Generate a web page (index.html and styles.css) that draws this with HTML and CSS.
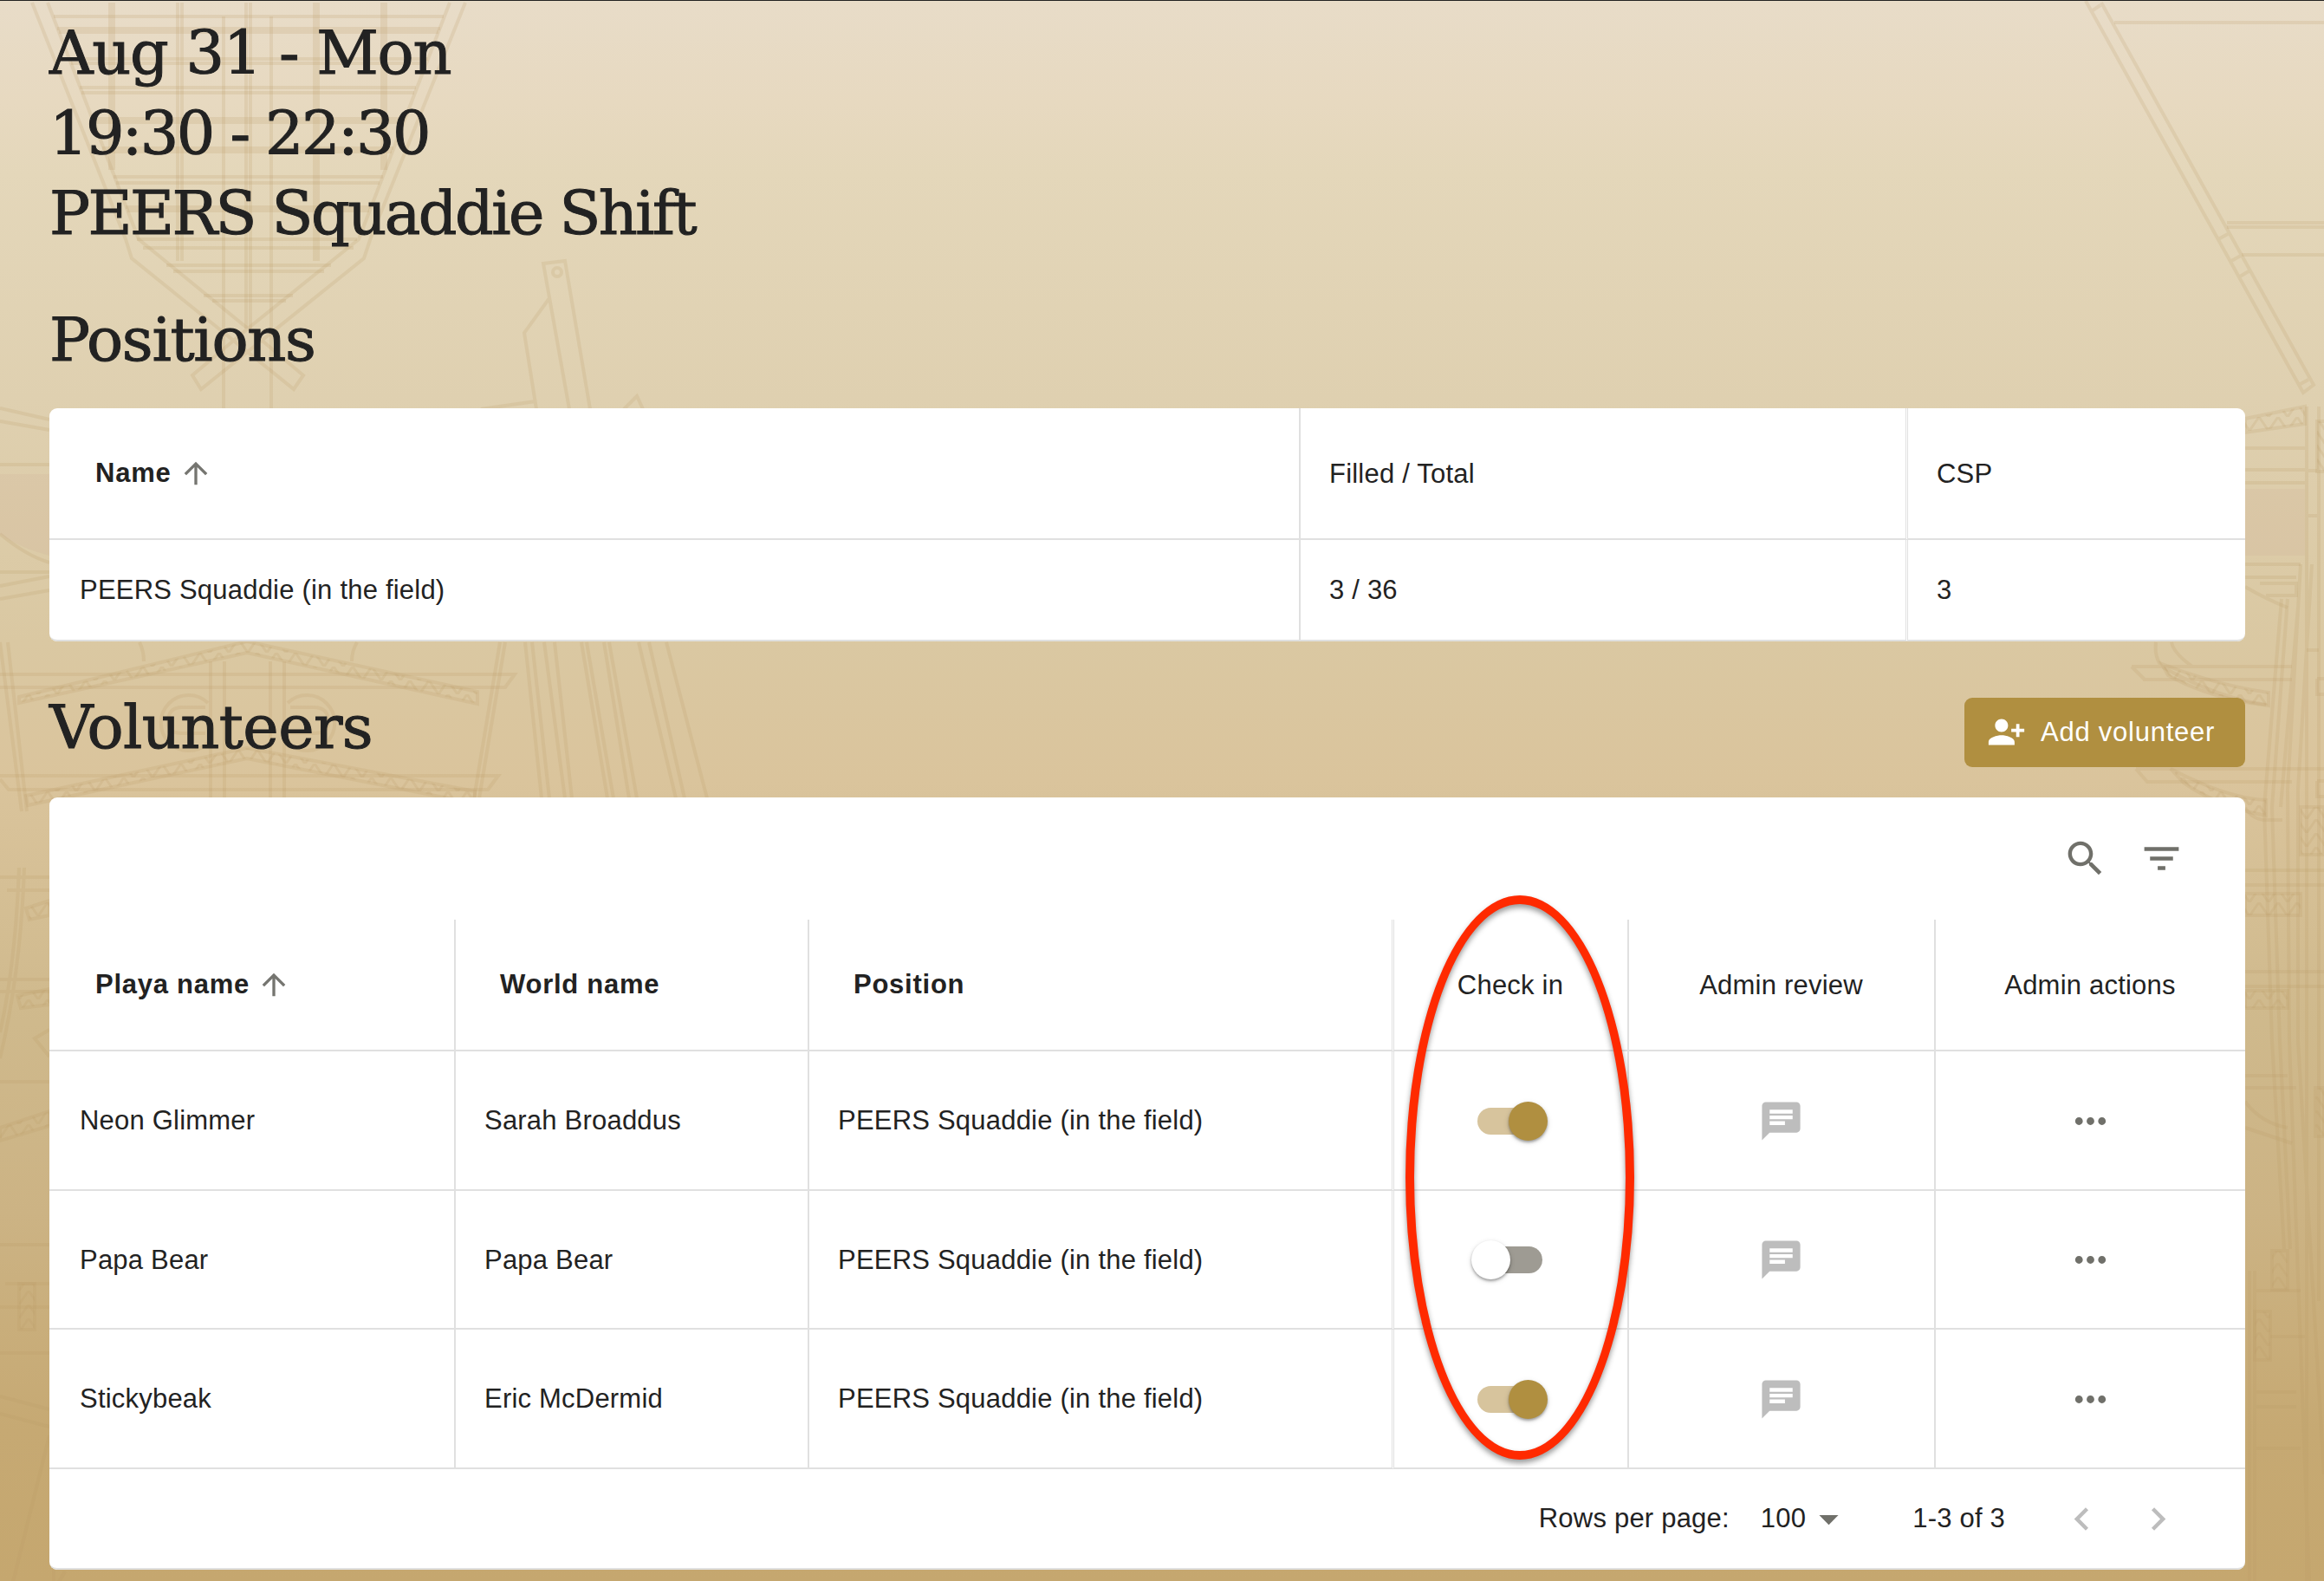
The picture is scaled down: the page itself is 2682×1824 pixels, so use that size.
FILE: index.html
```html
<!DOCTYPE html>
<html lang="en">
<head>
    <meta charset="UTF-8">
    <meta name="viewport" content="width=device-width, initial-scale=1.0">
    <title>PEERS Squaddie Shift</title>
    <link rel="stylesheet" href="styles.css">
</head>
<body>
    <!-- ship drawing behind the page -->
    <svg class="backdrop" viewBox="0 0 2682 1824" aria-hidden="true">
        <defs>
            <pattern id="lattice" width="22" height="16" patternUnits="userSpaceOnUse">
                <path class="lattice-line" d="M0 16L11 0L22 16"/>
            </pattern>
        </defs>
        <!-- stern window -->
        <path d="M37 2L145 275L152 297L339 448L350 432L286 378L160 275L55 2M537 2L428 273L420 297L232 448L222 432L286 378L414 275L519 2"/>
        <path d="M127 2V195M131 2V195M205 2V300M210 2V300M284 2V378M289 2V378M363 2V300M367 2V300M441 2V195M445 2V195M258 18V471M313 18V471"/>
        <path d="M62 18H512M66 32H508M68 36H506M80 67H494M82 72H492M92 100H480M94 106H478M106 136H466M108 140H464M118 170H454M120 174H452M131 203H442M134 210H438M145 238H428M147 242H426M158 275H412M165 285H408M192 305H382M200 312H374M235 340H338M245 346H330"/>
        <!-- oar -->
        <path d="M657 471L627 303L652 300L681 471M619 471L605 383L634 343M720 471L735 456L742 471M555 471L618 462"/>
        <circle cx="643" cy="313" r="5"/>
        <!-- upper left trusses -->
        <path d="M0 470L57 483M0 485L57 495M0 535H57M0 615Q30 640 57 648M0 659H57M0 675L57 664M0 690L57 680"/>
        <path class="tint" d="M0 546H57V640Q20 630 0 615Z"/>
        <path class="truss" d="M22 803L285 739L551 797L551 811L285 752L22 810Z"/>
        <path class="truss" d="M30 917L285 862L548 912L548 926L285 874L32 928Z"/>
        <path d="M0 777H594L583 792H0M0 894H575L563 910H10L0 898M161 740Q166 750 166 762M412 740Q406 750 406 762"/>
        <path d="M243 762V920M259 762V920M312 762V920M328 762V920"/>
        <path d="M240 810A32 32 0 1 0 240 856M237 815H210Q194 815 194 832Q194 845 210 845H237M332 810A32 32 0 1 1 332 856M335 815H362Q379 815 379 832Q379 845 362 845H335"/>
        <path d="M0 740L25 935M9 740L31 935M583 740L553 920M577 740L547 920M606 740L625 920M614 740L634 920M628 740L652 920M640 740L660 920M671 740L701 920M677 740L708 920M697 740L726 920M703 740L735 920M737 740L780 920M749 740L790 920M769 740L816 920"/>
        <!-- lower left -->
        <path d="M0 1011H57M8 1026H57M22 1000Q18 1110 0 1190M28 1000Q24 1120 0 1220M0 1129H57M0 1143H57M57 1187L40 1197L57 1218M0 1247H57M0 1435H57M6 1480H57M0 1507H57M0 1560H57M0 1610L57 1625M0 1630L57 1645M57 1655L15 1824M62 1810V1824M75 1812L68 1824"/>
        <path class="truss" d="M30 1047L57 1038V1055L34 1060ZM20 1148L57 1140V1158L24 1162ZM0 1300L57 1281V1298L0 1315ZM22 1480H40V1533H22Z"/>
        <!-- upper right beam -->
        <path d="M2407 0L2658 452L2670 443L2425 2M2415 11L2424 5M2560 275L2571 269M2575 300L2586 294M2585 318L2595 312M2653 443L2664 437"/>
        <path d="M2440 25H2682M2570 256H2682M2570 261H2682M2587 293H2682"/>
        <!-- right hull -->
        <path class="tint" d="M2591 563H2660V640H2591Z"/>
        <path class="truss" d="M2591 482L2660 468V488L2591 498ZM2674 485H2690V543H2674Z"/>
        <path d="M2591 516H2660M2591 541H2662M2591 556H2662M2591 650H2655M2591 665H2650M2662 468V640M2676 468V640M2662 542H2676M2662 594H2676M2591 676Q2615 690 2640 700M2608 672H2650V686H2615"/>
        <path d="M2488 740Q2486 758 2495 768Q2560 805 2615 812M2506 740Q2508 752 2530 768M2460 768H2645M2473 783H2645M2460 768L2475 783M2465 886L2478 901H2645M2465 886H2682M2591 931Q2600 945 2615 945H2634"/>
        <path class="truss" d="M2495 765Q2560 790 2618 798V813Q2550 805 2502 778ZM2505 886Q2570 920 2615 922V940Q2560 930 2520 902Z"/>
        <path d="M2655 650L2640 910L2642 1200L2665 1824M2668 650L2652 910V1200L2682 1700M2633 690L2613 930L2622 1200L2636 1440M2640 690L2622 930L2631 1200L2643 1440M2652 700L2632 930M2662 640V1824M2676 640V1500"/>
        <path d="M2662 749H2676M2674 782H2690V800H2674V782M2674 900H2690V918H2674V900M2591 1003H2682M2591 1020H2682M2591 1120H2682M2591 1137H2682M2591 1240H2640M2591 1254H2650M2591 1270Q2610 1295 2640 1300M2591 1300L2645 1318M2602 1488H2655M2620 1541H2660M2604 1605H2650M2604 1622H2650M2604 1670H2655M2596 1465V1824M2602 1465V1824"/>
        <path class="truss" d="M2622 1442H2640V1487H2622ZM2602 1512H2620V1568H2602ZM2655 930H2682V985H2655ZM2591 1030H2655V1055H2591ZM2591 1142H2640V1162H2591ZM2672 1254H2682V1310H2672Z"/>
    </svg>

    <main class="page">
        <h1 class="heading">
            <span class="line-date">Aug 31 - Mon</span><br>
            <span class="line-time">19:30 - 22:30</span><br>
            <span class="line-shift">PEERS Squaddie Shift</span>
        </h1>

        <h2 class="heading positions-title">Positions</h2>
        <section class="card">
            <table class="positions">
                <colgroup><col class="c-name"><col class="c-filled"><col class="c-csp"></colgroup>
                <thead>
                    <tr>
                        <th class="sortable">Name <svg class="arrow" viewBox="0 0 24 24"><path d="M4 12l1.41 1.41L11 7.83V20h2V7.83l5.58 5.59L20 12l-8-8-8 8z"/></svg></th>
                        <th class="double">Filled / Total</th>
                        <th>CSP</th>
                    </tr>
                </thead>
                <tbody>
                    <tr>
                        <td>PEERS Squaddie (in the field)</td>
                        <td class="double">3 / 36</td>
                        <td>3</td>
                    </tr>
                </tbody>
            </table>
        </section>

        <div class="title-row">
            <h2 class="heading volunteers-title">Volunteers</h2>
            <button class="add-btn">
                <svg viewBox="0 0 24 24"><path d="M13 8c0-2.21-1.79-4-4-4S5 5.79 5 8s1.79 4 4 4 4-1.79 4-4zm2 2v2h3v3h2v-3h3v-2h-3V7h-2v3h-3zM1 18v2h16v-2c0-2.66-5.33-4-8-4s-8 1.34-8 4z"/></svg>
                Add volunteer
            </button>
        </div>

        <section class="card">
            <div class="toolbar">
                <svg class="icon" viewBox="0 0 24 24"><path d="M15.5 14h-.79l-.28-.27C15.41 12.59 16 11.11 16 9.5 16 5.91 13.09 3 9.5 3S3 5.91 3 9.5 5.91 16 9.5 16c1.61 0 3.09-.59 4.23-1.57l.27.28v.79l5 4.99L20.49 19l-4.99-5zm-6 0C7.01 14 5 11.99 5 9.5S7.01 5 9.5 5 14 7.01 14 9.5 11.99 14 9.5 14z"/></svg>
                <svg class="icon" viewBox="0 0 24 24"><path d="M10 18h4v-2h-4v2zM3 6v2h18V6H3zm3 7h12v-2H6v2z"/></svg>
            </div>
            <table class="volunteers">
                <colgroup><col class="c-playa"><col class="c-world"><col class="c-position"><col class="c-check"><col class="c-review"><col class="c-actions"></colgroup>
                <thead>
                    <tr>
                        <th class="sortable">Playa name <svg class="arrow" viewBox="0 0 24 24"><path d="M4 12l1.41 1.41L11 7.83V20h2V7.83l5.58 5.59L20 12l-8-8-8 8z"/></svg></th>
                        <th class="sortable">World name</th>
                        <th class="sortable double">Position</th>
                        <th class="center">Check in</th>
                        <th class="center">Admin review</th>
                        <th class="center">Admin actions</th>
                    </tr>
                </thead>
                <tbody>
                    <tr>
                        <td>Neon Glimmer</td>
                        <td>Sarah Broaddus</td>
                        <td class="double">PEERS Squaddie (in the field)</td>
                        <td class="center"><span class="switch on"></span></td>
                        <td class="center"><svg class="icon chat" viewBox="0 0 24 24"><path d="M20 2H4c-1.1 0-1.99.9-1.99 2L2 22l4-4h14c1.1 0 2-.9 2-2V4c0-1.1-.9-2-2-2zM6 9h12v2H6V9zm8 5H6v-2h8v2zm4-6H6V6h12v2z"/></svg></td>
                        <td class="center"><svg class="icon" viewBox="0 0 24 24"><path d="M6 10c-1.1 0-2 .9-2 2s.9 2 2 2 2-.9 2-2-.9-2-2-2zm12 0c-1.1 0-2 .9-2 2s.9 2 2 2 2-.9 2-2-.9-2-2-2zm-6 0c-1.1 0-2 .9-2 2s.9 2 2 2 2-.9 2-2-.9-2-2-2z"/></svg></td>
                    </tr>
                    <tr>
                        <td>Papa Bear</td>
                        <td>Papa Bear</td>
                        <td class="double">PEERS Squaddie (in the field)</td>
                        <td class="center"><span class="switch"></span></td>
                        <td class="center"><svg class="icon chat" viewBox="0 0 24 24"><path d="M20 2H4c-1.1 0-1.99.9-1.99 2L2 22l4-4h14c1.1 0 2-.9 2-2V4c0-1.1-.9-2-2-2zM6 9h12v2H6V9zm8 5H6v-2h8v2zm4-6H6V6h12v2z"/></svg></td>
                        <td class="center"><svg class="icon" viewBox="0 0 24 24"><path d="M6 10c-1.1 0-2 .9-2 2s.9 2 2 2 2-.9 2-2-.9-2-2-2zm12 0c-1.1 0-2 .9-2 2s.9 2 2 2 2-.9 2-2-.9-2-2-2zm-6 0c-1.1 0-2 .9-2 2s.9 2 2 2 2-.9 2-2-.9-2-2-2z"/></svg></td>
                    </tr>
                    <tr>
                        <td>Stickybeak</td>
                        <td>Eric McDermid</td>
                        <td class="double">PEERS Squaddie (in the field)</td>
                        <td class="center"><span class="switch on"></span></td>
                        <td class="center"><svg class="icon chat" viewBox="0 0 24 24"><path d="M20 2H4c-1.1 0-1.99.9-1.99 2L2 22l4-4h14c1.1 0 2-.9 2-2V4c0-1.1-.9-2-2-2zM6 9h12v2H6V9zm8 5H6v-2h8v2zm4-6H6V6h12v2z"/></svg></td>
                        <td class="center"><svg class="icon" viewBox="0 0 24 24"><path d="M6 10c-1.1 0-2 .9-2 2s.9 2 2 2 2-.9 2-2-.9-2-2-2zm12 0c-1.1 0-2 .9-2 2s.9 2 2 2 2-.9 2-2-.9-2-2-2zm-6 0c-1.1 0-2 .9-2 2s.9 2 2 2 2-.9 2-2-.9-2-2-2z"/></svg></td>
                    </tr>
                </tbody>
            </table>
            <div class="pager">
                <span>Rows per page:</span>
                <span class="per-page">100 <svg class="icon" viewBox="0 0 24 24"><path d="M7 10l5 5 5-5z"/></svg></span>
                <span class="range">1-3 of 3</span>
                <svg class="icon nav" viewBox="0 0 24 24"><path d="M15.41 16.59L10.83 12l4.58-4.59L14 6l-6 6 6 6 1.41-1.41z"/></svg>
                <svg class="icon nav" viewBox="0 0 24 24"><path d="M8.59 16.59L13.17 12 8.59 7.41 10 6l6 6-6 6-1.41-1.41z"/></svg>
            </div>
            <div class="marker"></div>
        </section>
    </main>
</body>
</html>
```
FILE: styles.css
```css
:root {
    --text: #222;
    --gold: #b08f40;
    --line: #e0e0e0;
    --icon: #70706a;
    --muted: #bdbdbd;
}

* {
    box-sizing: border-box;
}

body {
    margin: 0;
    height: 1824px;
    overflow: hidden;
    position: relative;
    border-top: 1px solid #222;
    color: var(--text);
    font: 31px/44px "Helvetica Neue", "Liberation Sans", Arial, sans-serif;
    letter-spacing: 0.21px;
    background: linear-gradient(#e8dcc8 0, #e7d9c0 120px, #e4d7ba 200px, #dfd0b0 460px, #dac8a2 740px, #dac49c 900px, #cfb98c 1180px, #ccb384 1400px, #c6a973 1650px, #c5a76f 1824px);
}

.backdrop {
    position: absolute;
    top: 0;
    left: 0;
    width: 2682px;
    height: 1824px;
    fill: none;
    stroke: rgba(184, 154, 100, 0.19);
    stroke-width: 4;
}

.backdrop .truss {
    fill: url(#lattice);
}

.backdrop .lattice-line {
    stroke-width: 3;
}

.backdrop .tint {
    fill: rgba(200, 170, 150, 0.15);
    stroke: none;
}

.page {
    position: relative;
    padding: 14px 91px 0 57px;
}

.heading {
    margin: 0;
    font: 400 70px/92.5px Rockwell, "DejaVu Serif", serif;
    white-space: nowrap;
    -webkit-text-stroke: 1px var(--text);
}

.line-date { letter-spacing: -1.3px; }
.line-time { letter-spacing: -2.6px; }
.line-shift { letter-spacing: -2.6px; }

.positions-title {
    margin: 53px 0 33px;
    letter-spacing: -1.3px;
}

.volunteers-title {
    letter-spacing: -0.6px;
}

.card {
    position: relative;
    background: #fff;
    border-radius: 9px;
}

table {
    width: 100%;
    table-layout: fixed;
    border-collapse: separate;
    border-spacing: 0;
}

th, td {
    padding: 1px 0 0 33px;
    text-align: left;
    font-weight: 400;
    border-right: 2px solid var(--line);
    border-bottom: 2px solid var(--line);
    vertical-align: middle;
}

td:first-child {
    padding-left: 35px;
}

th {
    height: 152px;
}

th.sortable {
    padding: 0 0 0 51px;
    font-weight: 700;
    letter-spacing: 0.75px;
}

th.sortable:first-child {
    padding-left: 53px;
}

th:last-child, td:last-child {
    border-right: none;
}

th.double, td.double {
    border-right: 3px double var(--line);
}

th.center, td.center {
    padding: 1px 1px 0 0;
    text-align: center;
}

.arrow {
    width: 40px;
    height: 40px;
    margin-left: -1px;
    vertical-align: -10px;
    fill: #757570;
}

.c-name { width: 1444px; }
.c-filled { width: 701px; }
.c-csp { width: 389px; }
.c-playa { width: 469px; }
.c-world { width: 408px; }
.c-position { width: 675px; }
.c-check { width: 271px; }
.c-review { width: 354px; }
.c-actions { width: 357px; }

.positions td {
    height: 117px;
}

.positions td:first-child { border-bottom-left-radius: 9px; }
.positions td:last-child { border-bottom-right-radius: 9px; }

.volunteers td {
    height: 161px;
}

.volunteers tr:nth-child(2) td {
    height: 160px;
}

.title-row {
    display: flex;
    justify-content: space-between;
    align-items: flex-end;
    height: 91px;
    margin: 54px 0 35px;
}

.add-btn {
    display: flex;
    align-items: center;
    width: 324px;
    height: 80px;
    padding: 0 0 1px 26px;
    gap: 17px;
    border: none;
    border-radius: 9px;
    background: var(--gold);
    color: #fff;
    font: inherit;
    letter-spacing: 0.75px;
    white-space: nowrap;
}

.add-btn svg {
    width: 45px;
    height: 45px;
    fill: #fff;
}

.toolbar {
    display: flex;
    justify-content: flex-end;
    align-items: center;
    gap: 35px;
    height: 141px;
    padding: 0 70px 1px 0;
}

.icon {
    width: 53px;
    height: 53px;
    flex: none;
    display: block;
    fill: var(--icon);
}

td .icon {
    margin: 0 auto;
}

.icon.chat, .icon.nav {
    fill: var(--muted);
}

.switch {
    display: block;
    position: relative;
    left: -1px;
    width: 75px;
    height: 31px;
    margin: 0 auto;
    border-radius: 16px;
    background: #9e9b93;
}

.switch::after {
    content: "";
    position: absolute;
    top: -7px;
    left: -7px;
    width: 45px;
    height: 45px;
    border-radius: 50%;
    background: #fff;
    box-shadow: 0 2px 3px rgba(0, 0, 0, 0.3), 0 2px 6px rgba(0, 0, 0, 0.15);
}

.switch.on {
    background: #d7c49d;
}

.switch.on::after {
    left: 36px;
    background: var(--gold);
}

.pager {
    display: flex;
    justify-content: flex-end;
    align-items: center;
    height: 116px;
    padding-right: 74px;
    border-bottom: 2px solid var(--line);
    border-radius: 0 0 9px 9px;
}

.per-page {
    display: flex;
    align-items: center;
    margin-left: 36px;
}

.range {
    margin: 0 62px 0 70px;
}

.nav + .nav {
    margin-left: 35px;
}

/* red ring round the check-in column */
.marker {
    position: absolute;
    left: 1565px;
    top: 113px;
    width: 264px;
    height: 651px;
    border: 10px solid #ff2a00;
    border-radius: 50%;
    filter: drop-shadow(0 4px 3px rgba(0, 0, 0, 0.4));
}
```
